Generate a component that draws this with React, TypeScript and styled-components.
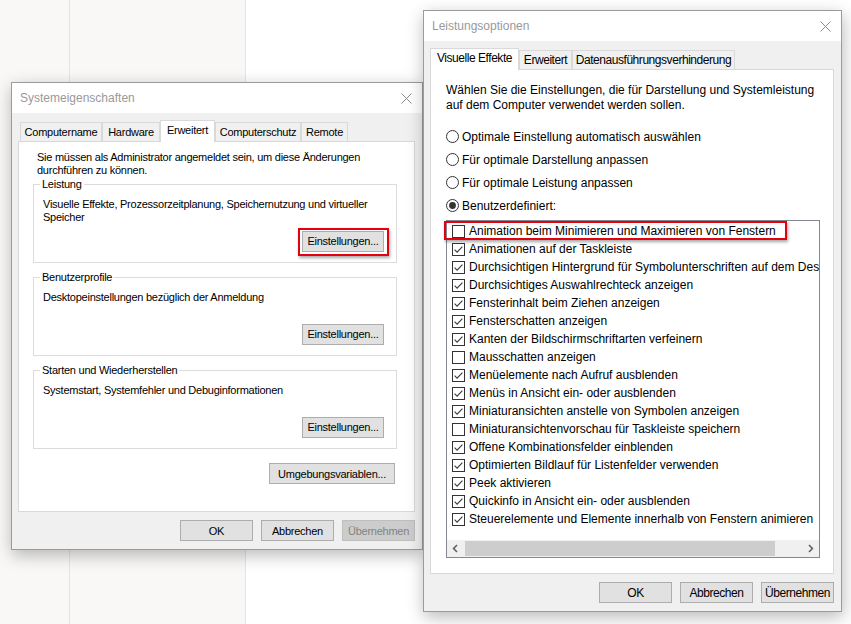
import React from "react";
import styled, { createGlobalStyle, css } from "styled-components";

const GlobalStyle = createGlobalStyle`
  html, body {
    margin: 0;
    padding: 0;
  }
  body {
    width: 851px;
    height: 624px;
    overflow: hidden;
    font-family: "Liberation Sans", Arial, sans-serif;
    color: #000;
  }
`;

const Desktop = styled.div`
  position: relative;
  width: 851px;
  height: 624px;
  display: flex;
  background: #fff;
  overflow: hidden;
`;

const Pane = styled.div<{ $w: number }>`
  flex: none;
  width: ${(p) => p.$w}px;
  background: #f9f8f7;
  border-right: 1px solid #e6e5e4;
`;

const Tab = styled.div<{ $w: number; $active?: boolean }>`
  box-sizing: border-box;
  width: ${(p) => p.$w}px;
  height: 19px;
  display: flex;
  align-items: center;
  justify-content: center;
  border: 1px solid #d9d9d9;
  border-bottom: none;
  background: #f0f0f0;
  white-space: nowrap;
  ${(p) =>
    p.$active &&
    css`
      position: relative;
      z-index: 1;
      height: 22px;
      margin-bottom: -1px;
      padding-bottom: 3px;
      background: #fff;
      &:first-child {
        margin-left: -2px;
      }
    `}
`;

const Button = styled.button<{ $w?: number; $marked?: boolean }>`
  position: relative;
  box-sizing: border-box;
  flex: none;
  width: ${(p) => p.$w ?? 73}px;
  height: 21px;
  padding: 0;
  margin: 0;
  font: inherit;
  letter-spacing: inherit;
  color: #000;
  background: #e1e1e1;
  border: 1px solid #adadad;
  &:disabled {
    color: #838383;
    background: #cccccc;
    border-color: #bfbfbf;
  }
  ${(p) =>
    p.$marked &&
    css`
      &::after {
        content: "";
        position: absolute;
        inset: -4px -6px -5px -5px;
        border: 2px solid #e3000f;
        box-shadow: 1px 2px 3px rgba(0, 0, 0, 0.35);
      }
    `}
`;

const Window = styled.div<{
  $x: number;
  $y: number;
  $w: number;
  $h: number;
  $size: number;
  $tracking: number;
  $controlTracking: number;
}>`
  position: absolute;
  left: ${(p) => p.$x}px;
  top: ${(p) => p.$y}px;
  width: ${(p) => p.$w}px;
  height: ${(p) => p.$h}px;
  box-sizing: border-box;
  display: flex;
  flex-direction: column;
  background: #f0f0f0;
  border: 1px solid #9b9b9b;
  box-shadow: 1px 5px 16px rgba(0, 0, 0, 0.28);
  font-size: ${(p) => p.$size}px;
  letter-spacing: ${(p) => p.$tracking}px;

  ${Tab}, ${Button} {
    letter-spacing: ${(p) => p.$controlTracking}px;
  }
`;

const TitleBar = styled.div`
  flex: none;
  height: 30px;
  display: flex;
  align-items: center;
  justify-content: space-between;
  padding: 0 10px 0 8px;
  background: #fff;
  font-size: 12px;
  letter-spacing: 0;
  color: #999;
`;

const Body = styled.div`
  flex: 1;
  display: flex;
  flex-direction: column;
  padding: 7px 7px 8px 6px;
  min-height: 0;
`;

const TabStrip = styled.div`
  flex: none;
  display: flex;
  align-items: flex-end;
  height: 21px;
  padding-left: 2px;
`;

const Panel = styled.div<{ $pad: string }>`
  flex: 1;
  display: flex;
  flex-direction: column;
  min-height: 0;
  background: #fff;
  border: 1px solid #d9d9d9;
  padding: ${(p) => p.$pad};
`;

const Note = styled.p<{ $lh: number; $indent?: number }>`
  margin: 0;
  line-height: ${(p) => p.$lh}px;
  padding-left: ${(p) => p.$indent ?? 0}px;
`;

const Group = styled.fieldset<{ $gap: number }>`
  margin: ${(p) => p.$gap}px 0 0;
  padding: 0;
  min-width: 0;
  border: 1px solid #dcdcdc;
`;

const Legend = styled.legend`
  margin-left: 6px;
  padding: 0 2px;
  line-height: 13px;
`;

const GroupBody = styled.div`
  box-sizing: border-box;
  height: 71px;
  display: flex;
  flex-direction: column;
  padding: 7px 12px 10px 9px;
  line-height: 13px;
`;

const GroupAction = styled(Button)`
  margin-top: auto;
  align-self: flex-end;
`;

const PanelAction = styled(Button)`
  margin: 14px 2px 0 0;
  align-self: flex-end;
`;

const Footer = styled.div`
  flex: none;
  display: flex;
  justify-content: flex-end;
  gap: 8px;
  margin-top: 8px;
`;

const RadioList = styled.div`
  margin-top: 12px;
  display: flex;
  flex-direction: column;
`;

const RadioRow = styled.label`
  height: 23px;
  display: flex;
  align-items: center;
  gap: 3px;
`;

const ListBox = styled.div`
  flex: 1;
  min-height: 0;
  width: 374px;
  box-sizing: border-box;
  margin-top: 3px;
  display: flex;
  flex-direction: column;
  border: 1px solid #828790;
  background: #fff;
`;

const ListItems = styled.div`
  flex: 1;
  padding: 1px 0 0 5px;
  clip-path: inset(-6px 0 -6px -8px);
`;

const ItemRow = styled.div`
  height: 18px;
  display: flex;
  align-items: center;
  white-space: nowrap;
`;

const ItemInner = styled.span<{ $marked?: boolean }>`
  position: relative;
  display: inline-flex;
  align-items: center;
  gap: 4px;
  ${(p) =>
    p.$marked &&
    css`
      &::after {
        content: "";
        position: absolute;
        inset: -3px -11px -2px -8px;
        border: 2px solid #e3000f;
        box-shadow: 1px 2px 3px rgba(0, 0, 0, 0.35);
      }
    `}
`;

const ScrollBar = styled.div`
  flex: none;
  height: 17px;
  display: flex;
  align-items: stretch;
  background: #f0f0f0;
`;

const ScrollArrow = styled.div`
  flex: none;
  width: 17px;
  display: flex;
  align-items: center;
  justify-content: center;
`;

const ScrollThumb = styled.div<{ $w: number }>`
  flex: none;
  width: ${(p) => p.$w}px;
  margin: 1px 0 1px 1px;
  background: #cdcdcd;
`;

const ScrollTrack = styled.div`
  flex: 1;
`;

const CloseIcon = () => (
  <svg width="11" height="11" viewBox="0 0 11 11">
    <path d="M0.5 0.5 L10.5 10.5 M10.5 0.5 L0.5 10.5" stroke="#8a8a8a" strokeWidth="1" fill="none" />
  </svg>
);

const CheckBox = ({ checked }: { checked: boolean }) => (
  <svg width="13" height="13" viewBox="0 0 13 13">
    <rect x="0.5" y="0.5" width="12" height="12" fill="#fff" stroke="#333" />
    {checked && <path d="M2.6 6.6 L5.1 9.1 L10.4 3.6" fill="none" stroke="#3a3a3a" strokeWidth="1.1" />}
  </svg>
);

const Radio = ({ checked }: { checked: boolean }) => (
  <svg width="13" height="13" viewBox="0 0 13 13">
    <circle cx="6.5" cy="6.5" r="6" fill="#fff" stroke="#333" />
    {checked && <circle cx="6.5" cy="6.5" r="3.4" fill="#333" />}
  </svg>
);

const Chevron = ({ dir }: { dir: "left" | "right" }) => (
  <svg width="7" height="9" viewBox="0 0 7 9">
    <path
      d={dir === "left" ? "M5 1 L1.6 4.5 L5 8" : "M2 1 L5.4 4.5 L2 8"}
      fill="none"
      stroke="#606060"
      strokeWidth="1.6"
    />
  </svg>
);

const systemTabs = [
  { label: "Computername", w: 82 },
  { label: "Hardware", w: 58 },
  { label: "Erweitert", w: 55, active: true },
  { label: "Computerschutz", w: 86 },
  { label: "Remote", w: 47 },
];

const perfTabs = [
  { label: "Visuelle Effekte", w: 89, active: true },
  { label: "Erweitert", w: 53 },
  { label: "Datenausführungsverhinderung", w: 163 },
];

const groups = [
  {
    title: "Leistung",
    text: "Visuelle Effekte, Prozessorzeitplanung, Speichernutzung und virtueller Speicher",
    marked: true,
  },
  { title: "Benutzerprofile", text: "Desktopeinstellungen bezüglich der Anmeldung" },
  { title: "Starten und Wiederherstellen", text: "Systemstart, Systemfehler und Debuginformationen" },
];

const radios = [
  { label: "Optimale Einstellung automatisch auswählen", checked: false },
  { label: "Für optimale Darstellung anpassen", checked: false },
  { label: "Für optimale Leistung anpassen", checked: false },
  { label: "Benutzerdefiniert:", checked: true },
];

const effects: [string, boolean][] = [
  ["Animation beim Minimieren und Maximieren von Fenstern", false],
  ["Animationen auf der Taskleiste", true],
  ["Durchsichtigen Hintergrund für Symbolunterschriften auf dem Desktop", true],
  ["Durchsichtiges Auswahlrechteck anzeigen", true],
  ["Fensterinhalt beim Ziehen anzeigen", true],
  ["Fensterschatten anzeigen", true],
  ["Kanten der Bildschirmschriftarten verfeinern", true],
  ["Mausschatten anzeigen", false],
  ["Menüelemente nach Aufruf ausblenden", true],
  ["Menüs in Ansicht ein- oder ausblenden", true],
  ["Miniaturansichten anstelle von Symbolen anzeigen", true],
  ["Miniaturansichtenvorschau für Taskleiste speichern", false],
  ["Offene Kombinationsfelder einblenden", true],
  ["Optimierten Bildlauf für Listenfelder verwenden", true],
  ["Peek aktivieren", true],
  ["Quickinfo in Ansicht ein- oder ausblenden", true],
  ["Steuerelemente und Elemente innerhalb von Fenstern animieren", true],
];

function SystemProperties() {
  return (
    <Window $x={11} $y={82} $w={412} $h={468} $size={11} $tracking={-0.25} $controlTracking={-0.25}>
      <TitleBar>
        <span>Systemeigenschaften</span>
        <CloseIcon />
      </TitleBar>
      <Body>
        <TabStrip>
          {systemTabs.map((t) => (
            <Tab key={t.label} $w={t.w} $active={t.active}>
              {t.label}
            </Tab>
          ))}
        </TabStrip>
        <Panel $pad="9px 17px 0 14px">
          <Note $lh={13} $indent={4}>
            Sie müssen als Administrator angemeldet sein, um diese Änderungen
            <br />
            durchführen zu können.
          </Note>
          {groups.map((g, i) => (
            <Group key={g.title} $gap={i === 0 ? 1 : 8}>
              <Legend>{g.title}</Legend>
              <GroupBody>
                <span>{g.text}</span>
                <GroupAction $w={82} $marked={g.marked}>
                  Einstellungen...
                </GroupAction>
              </GroupBody>
            </Group>
          ))}
          <PanelAction $w={126}>Umgebungsvariablen...</PanelAction>
        </Panel>
        <Footer>
          <Button>OK</Button>
          <Button>Abbrechen</Button>
          <Button disabled>Übernehmen</Button>
        </Footer>
      </Body>
    </Window>
  );
}

function PerformanceOptions() {
  return (
    <Window $x={423} $y={10} $w={419} $h={602} $size={12} $tracking={0} $controlTracking={-0.45}>
      <TitleBar>
        <span>Leistungsoptionen</span>
        <CloseIcon />
      </TitleBar>
      <Body>
        <TabStrip>
          {perfTabs.map((t) => (
            <Tab key={t.label} $w={t.w} $active={t.active}>
              {t.label}
            </Tab>
          ))}
        </TabStrip>
        <Panel $pad="13px 13px 15px 15px">
          <Note $lh={15}>
            Wählen Sie die Einstellungen, die für Darstellung und Systemleistung
            <br />
            auf dem Computer verwendet werden sollen.
          </Note>
          <RadioList>
            {radios.map((r) => (
              <RadioRow key={r.label}>
                <Radio checked={r.checked} />
                {r.label}
              </RadioRow>
            ))}
          </RadioList>
          <ListBox>
            <ListItems>
              {effects.map(([label, checked], i) => (
                <ItemRow key={label}>
                  <ItemInner $marked={i === 0}>
                    <CheckBox checked={checked} />
                    {label}
                  </ItemInner>
                </ItemRow>
              ))}
            </ListItems>
            <ScrollBar>
              <ScrollArrow>
                <Chevron dir="left" />
              </ScrollArrow>
              <ScrollThumb $w={310} />
              <ScrollTrack />
              <ScrollArrow>
                <Chevron dir="right" />
              </ScrollArrow>
            </ScrollBar>
          </ListBox>
        </Panel>
        <Footer>
          <Button>OK</Button>
          <Button>Abbrechen</Button>
          <Button>Übernehmen</Button>
        </Footer>
      </Body>
    </Window>
  );
}

export default function App() {
  return (
    <>
      <GlobalStyle />
      <Desktop>
        <Pane $w={69} />
        <Pane $w={175} />
        <SystemProperties />
        <PerformanceOptions />
      </Desktop>
    </>
  );
}
